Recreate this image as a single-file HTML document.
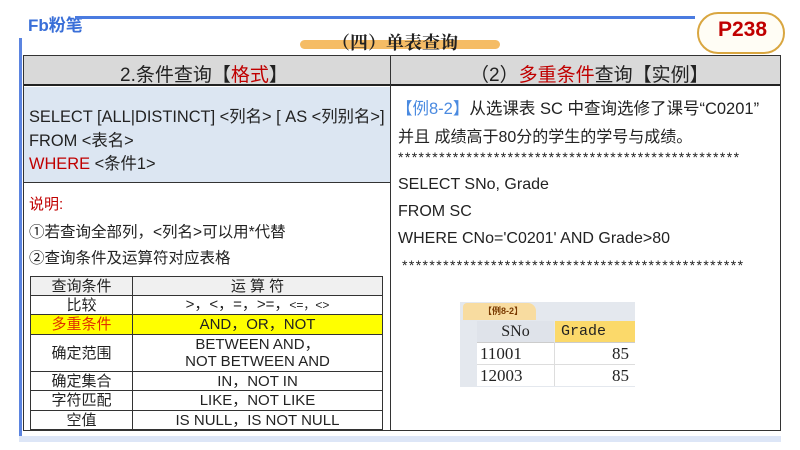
<!DOCTYPE html>
<html><head><meta charset="utf-8"><style>
*{margin:0;padding:0;box-sizing:border-box}
body{width:800px;height:450px;background:#fff;position:relative;overflow:hidden;font-family:"Liberation Sans","Noto Sans CJK SC",sans-serif;color:#222}
.a{position:absolute}
.t{position:absolute;white-space:nowrap;font-size:16px}
.r{color:#c00000}
table{border-collapse:collapse;position:absolute;left:30px;top:276px;width:353px;font-size:15px}
td{border:1px solid #333;text-align:center;line-height:17px;padding:0}
</style></head><body>
<div class="a" style="left:28px;top:11px;font-size:17px;font-weight:bold;color:#3a6fd8">Fb粉笔</div>
<div class="a" style="left:75px;top:16px;width:620px;height:3px;background:#4a7be0"></div>
<div class="a" style="left:19px;top:38px;width:3px;height:402px;background:#5b84e0"></div>
<div class="a" style="left:19px;top:436px;width:762px;height:6px;background:#dde6f7"></div>
<div class="a" style="left:300px;top:40px;width:200px;height:9px;background:#f3b04a;border-radius:6px;opacity:.85"></div>
<div class="t" style="left:332px;top:29px;font-size:18px;font-family:'Noto Serif CJK SC',serif;font-weight:bold">（四）单表查询</div>
<div class="a" style="left:697px;top:12px;width:88px;height:42px;border:2px solid #d9a640;border-radius:22px;background:#fffdf5"></div>
<div class="t" style="left:718px;top:18px;font-size:21px;font-weight:bold;color:#c00000">P238</div>
<div class="a" style="left:23px;top:55px;width:758px;height:376px;border:1px solid #333"></div>
<div class="a" style="left:24px;top:56px;width:756px;height:30px;background:#d9d9d9;border-bottom:2px solid #222"></div>
<div class="a" style="left:390px;top:56px;width:1px;height:374px;background:#333"></div>
<div class="a" style="left:24px;top:87px;width:366px;height:96px;background:#dce6f2;border-bottom:1px solid #333"></div>
<div class="t" style="left:120px;top:60px;font-size:19px">2.条件查询【<span class="r">格式</span>】</div>
<div class="t" style="left:470px;top:60px;font-size:19px">（2）<span class="r">多重条件</span>查询【实例】</div>
<div class="t" style="left:29px;top:103px;font-size:16.4px">SELECT [ALL|DISTINCT] &lt;列名&gt; [ AS &lt;列别名&gt;]</div>
<div class="t" style="left:29px;top:127px;font-size:16.4px">FROM &lt;表名&gt;</div>
<div class="t" style="left:29px;top:150px;font-size:16.4px"><span class="r">WHERE</span> &lt;条件1&gt;</div>
<div class="t r" style="left:29px;top:193px;font-size:15px">说明:</div>
<div class="t" style="left:29px;top:220px;font-size:15.5px">①若查询全部列，&lt;列名&gt;可以用*代替</div>
<div class="t" style="left:29px;top:246px;font-size:15.5px">②查询条件及运算符对应表格</div>
<table>
<tr style="background:#f0f0f0;height:19px"><td style="width:102px">查询条件</td><td>运 算 符</td></tr>
<tr style="height:19px"><td>比较</td><td>&gt;，&lt;，=，&gt;=，<span style="font-size:12px">&lt;=，&lt;&gt;</span></td></tr>
<tr style="height:20px;background:#ffff00"><td style="color:#e03000">多重条件</td><td>AND，OR，NOT</td></tr>
<tr style="height:37px"><td>确定范围</td><td>BETWEEN AND，<br>NOT BETWEEN AND</td></tr>
<tr style="height:19px"><td>确定集合</td><td>IN，NOT IN</td></tr>
<tr style="height:20px"><td>字符匹配</td><td>LIKE，NOT LIKE</td></tr>
<tr style="height:19px"><td>空值</td><td>IS NULL，IS NOT NULL</td></tr>
</table>
<div class="t" style="left:396px;top:95px;font-size:16.5px"><span style="color:#4a8ae0">【例8-2】</span>从选课表 SC 中查询选修了课号“C0201”</div>
<div class="t" style="left:398px;top:123px;font-size:16px">并且 成绩高于80分的学生的学号与成绩。</div>
<div class="t" style="left:398px;top:149px;font-size:14px;letter-spacing:1.4px">**************************************************</div>
<div class="t" style="left:398px;top:176px">SELECT SNo, Grade</div>
<div class="t" style="left:398px;top:203px">FROM SC</div>
<div class="t" style="left:398px;top:230px">WHERE CNo='C0201' AND Grade&gt;80</div>
<div class="t" style="left:402px;top:257px;font-size:14px;letter-spacing:1.4px">**************************************************</div>
<div class="a" style="left:460px;top:302px;width:175px;height:85px;background:#e4e8ee"></div>
<div class="a" style="left:463px;top:303px;width:73px;height:17px;background:#f8dca0;border-radius:4px 8px 0 0;font-size:9px;line-height:17px;font-weight:bold;color:#7a3a00;padding-left:20px">【例8-2】</div>
<div class="a" style="left:477px;top:321px;width:77px;height:21px;background:#dfe3ea;font-family:'Liberation Serif',serif;font-size:16px;line-height:21px;text-align:center">SNo</div>
<div class="a" style="left:555px;top:321px;width:80px;height:21px;background:#fbd96a;font-family:'Liberation Mono',monospace;font-size:15px;line-height:21px;padding-left:6px">Grade</div>
<div class="a" style="left:477px;top:342px;width:158px;height:44px;background:#fff;border-top:1px solid #ccc"></div>
<div class="a" style="left:477px;top:364px;width:158px;height:1px;background:#ddd"></div>
<div class="a" style="left:554px;top:342px;width:1px;height:44px;background:#ddd"></div>
<div class="t" style="left:480px;top:344px;font-family:'Liberation Serif',serif;font-size:17px">11001</div>
<div class="t" style="left:480px;top:366px;font-family:'Liberation Serif',serif;font-size:17px">12003</div>
<div class="t" style="left:612px;top:344px;font-family:'Liberation Serif',serif;font-size:17px">85</div>
<div class="t" style="left:612px;top:366px;font-family:'Liberation Serif',serif;font-size:17px">85</div>
</body></html>
